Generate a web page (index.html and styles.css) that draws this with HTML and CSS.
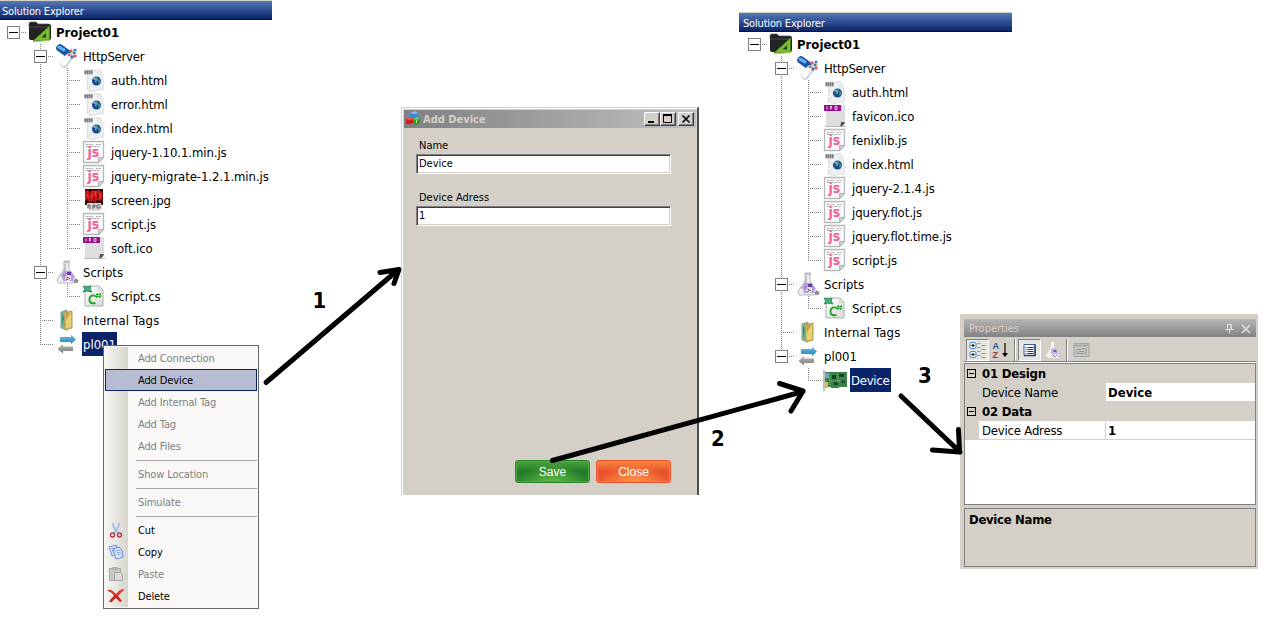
FILE: index.html
```html
<!DOCTYPE html>
<html lang="en">
<head>
<meta charset="utf-8">
<title>Add Device</title>
<link rel="stylesheet" href="styles.css">
</head>
<body>
<svg class="sprites" width="0" height="0">
  <defs>
    <linearGradient id="gPaper" x1="0" y1="0" x2="1" y2="1"><stop offset="0" stop-color="#fff"/><stop offset="1" stop-color="#d8d8d8"/></linearGradient>
    <linearGradient id="gBlue" x1="0" y1="0" x2="0" y2="1"><stop offset="0" stop-color="#7cc4e8"/><stop offset="1" stop-color="#1583bd"/></linearGradient>
    <linearGradient id="gGray" x1="0" y1="0" x2="0" y2="1"><stop offset="0" stop-color="#bdbdbd"/><stop offset="1" stop-color="#777"/></linearGradient>
    <symbol id="project" viewBox="0 0 24 24">
      <path d="M1 4q0-2 2-2h5l2 2h11q2 0 2 2v12q0 2-2 2H3q-2 0-2-2z" fill="#222"/>
      <path d="M1 7h22" stroke="#484848"/><path d="M1 7v-3q0-2 2-2h5l2 2h11" fill="none" stroke="#555" stroke-width=".7"/>
      <path d="M5 21 21.500 6v14z" fill="#78bd2c" stroke="#4f861b" stroke-width=".8"/>
      <path d="m13.500 17.500 4.500-4.500v4.500z" fill="#2c391b"/><path d="M4.500 22 22 20.500" stroke="#a5d95c" stroke-width="1.200"/>
    </symbol>
    <symbol id="server" viewBox="0 0 24 24">
      <path d="m5 4 7 5" stroke="#1558a8" stroke-width="7.500" stroke-linecap="round"/>
      <path d="m4 3 5 3" stroke="#69b4ec" stroke-width="3" stroke-linecap="round"/>
      <path d="m9 20 5-7" stroke="#c6ccd3" stroke-width="7.500" stroke-linecap="round"/>
      <path d="m8.500 19.500 4.500-6" stroke="#fbfbfc" stroke-width="5.500" stroke-linecap="round"/>
      <g fill="#dd5964"><circle cx="16" cy="7" r="1.700"/><circle cx="20" cy="12" r="1.700"/><circle cx="14" cy="11" r="1.300"/></g>
      <g fill="#3f78bb"><circle cx="20" cy="6" r="1.500"/><circle cx="17" cy="13" r="1.700"/><circle cx="19" cy="9" r="1.400"/></g>
      <g fill="#b3d47c"><circle cx="16" cy="9.500" r="1.200"/><circle cx="21" cy="9" r="1"/></g>
    </symbol>
    <symbol id="html" viewBox="0 0 24 24">
      <path d="M5 2h13q4 4 3 20-5-1-8 1-3 1-8-1 1-10 0-20z" fill="#f0f1f2" stroke="#d2d4d5" stroke-width=".8"/>
      <path d="m6 9 5 5-5 7m9-17 4 5" fill="none" stroke="#dadcdd"/>
      <rect x="2" y="2" width="9" height="4.500" rx="1" fill="#a8aaab"/><path d="M3.500 3v2.500m2-2.500v2.500m2-2.500v2.500M9.500 3v2.500" stroke="#5d6062" stroke-width=".8"/>
      <circle cx="14.500" cy="13" r="4.500" fill="#174a96"/><path d="M13 10.500q2-2 3 0l-1 3-2 1zm3.500.5 2 2-2 3z" fill="#56a77d"/><circle cx="12.500" cy="10.500" r="1.200" fill="#7fb4d7"/>
    </symbol>
    <symbol id="js" viewBox="0 0 24 24">
      <path d="M1.500 1.500h20v16l-5 5h-15z" fill="#fafafa" stroke="#b8b8b8" stroke-width="1.300"/>
      <path d="M21.500 17.500h-5v5z" fill="#d4d4d4" stroke="#aaa" stroke-width=".8"/>
      <path d="M4 4.500h7m3 0h5M4 6.500h14" stroke="#a2a2a2" stroke-dasharray="2 .7" stroke-width=".9"/>
      <text class="js-mark" x="5.500" y="17">js</text>
    </symbol>
    <symbol id="jpg" viewBox="0 0 24 24">
      <path d="M3 1h18v16H3z" fill="#250908"/>
      <path d="m3 3 3-1 2 2 3-2 3 1 2-1 4 2 1 5-2 4-4-1-2 3-3-2-3 2-1-4-3 2z" fill="#c91616"/>
      <path d="m5 6 2 4m6-7 1 5m4-3v6M10 5v5" stroke="#f0473a"/><path d="M8 4v4m4 1v5m4-8v5" stroke="#5c0a08"/>
      <path d="M5 15h14l1 6-4 2H9l-4-2z" fill="#d8d8d5"/><path d="M6 20v-3h2v4m3 0v-4h2v2h-2m7-2h-3v3h3v-2" fill="none" stroke="#5c5c5c"/>
    </symbol>
    <symbol id="ico" viewBox="0 0 24 24">
      <path d="M3 1h19v18l-3 4H3z" fill="#dedede"/><path d="M2 22.500h21" stroke="#b8b8b8"/><path d="M22 18q-1 4-5 4.500 1-2 1-4.500z" fill="#555"/>
      <path d="M1 1h17v6H1z" fill="#92118f"/><path d="M4 2.500V5.500m3-3h2l-2 1.500h2l-2 1.500m5-3h2v3h-2z" fill="none" stroke="#edbceb"/>
    </symbol>
    <symbol id="flask" viewBox="0 0 24 24">
      <path d="M9 1h6l-1 2v6l7 10q0 4-3 4H4q-3-1-1-5l6-9V3z" fill="#ededf1" stroke="#b5b5ba"/>
      <path d="M9 1h6v2H9zM9 4h2v6L7 17h-3l5-7z" fill="#c0c0c5"/>
      <path d="M9 11h7l3 5-1 5H8l-1-5z" fill="#b497e6"/><path d="M12 12h4v3h-4z" fill="#663aa2"/><path d="m8 14 2 2" stroke="#8a6ac4"/>
      <circle cx="13" cy="18" r="3" fill="#faf7f5"/><path d="m12 17 3 2m-4 1 2-1" stroke="#3d2543"/><path d="M9 17h3" stroke="#d27c5b"/>
      <ellipse cx="21" cy="21" rx="2.500" ry="2" fill="#8c8c91"/>
    </symbol>
    <symbol id="cs" viewBox="0 0 24 24">
      <path d="M3 2h14l4 4v16H3z" fill="url(#gPaper)" stroke="#a6b4a8"/><path d="m16 2 5 5h-5z" fill="#d3ddd4"/>
      <path d="m1 2 4 1 4-1-1 3 2 3-5-1-4 1 2-3z" fill="#45b17a" stroke="#2f8d5d"/>
      <path d="M14 12.500q-5-3-6.500 2-.5 6 6 4.500" fill="none" stroke="#28a32c" stroke-width="2"/>
      <path d="m15.500 9-1 5m4-5-1 5m-3.500-3.500h5m-5 2h5" stroke="#28a32c"/>
    </symbol>
    <symbol id="tags" viewBox="0 0 24 24">
      <path d="M6 4 12 2v20l-6-2z" fill="#76b8a0" stroke="#8ba38e"/><path d="M9 5 17 3v17l-7 2z" fill="#d4bf55" stroke="#b39a50"/>
      <path d="m11 13 5-8v14l-5 1z" fill="#e6d27a"/><path d="m7 5 2 5-2 9z" fill="#348f79"/><path d="m11 5 4-1-4 8z" fill="#ca9651"/>
    </symbol>
    <symbol id="link" viewBox="0 0 24 24">
      <path d="M5 5h11V2.500l5 5-5 4.500V10H5z" fill="url(#gBlue)"/><path d="M18 14.500H8V12l-5.500 5 5.500 4.500V19h10z" fill="url(#gGray)"/>
    </symbol>
    <symbol id="board" viewBox="0 0 24 24">
      <path d="M2 4h22v15h-8v1h-8v-1H2z" fill="#388347"/><path d="M1 2v21" stroke="#a4abad" stroke-width="1.500"/>
      <path d="M2 5h4v5H2z" fill="#6aa9cf"/><path d="M2 14h3v6H2z" fill="#eeb544"/>
      <path d="M9 7h4v4H9zm7-1h5v3h-5zm-5 8h4v3h-4zm7-2h4v3h-4z" fill="#153f28"/><path d="M7 6v11m8-11v10M8 13h14" stroke="#8bc06c" stroke-dasharray="1 1"/>
    </symbol>
    <symbol id="cubes" viewBox="0 0 16 16">
      <path d="m4 2 5-2 3 2v5l-4 2-4-2z" fill="#3c87d8"/><path d="m4 2 5-2 3 2-4 1z" fill="#86c0f2"/>
      <path d="m0 8 4-2 4 2v4l-4 1H0z" fill="#cf201c"/><path d="m0 8 4-2 4 2-4 1z" fill="#ee5a4b"/>
      <path d="m7 8 4-2 3 2v4l-4 2-3-2z" fill="#269b26"/><path d="m7 8 4-2 3 2-4 1z" fill="#63cf5a"/><path d="M10.500 9v3" stroke="#b4edaa"/>
    </symbol>
  </defs>
</svg>

<main class="canvas">
  <section class="explorer explorer-left">
    <h2 class="explorer-title">Solution Explorer</h2>
    <div class="tree">
      <div class="row"><i class="cell root"><b class="toggle"></b></i><svg class="icon"><use href="#project"/></svg><span class="label bold">Project01</span></div>
      <div class="row"><i class="cell"></i><i class="cell tee"><b class="toggle"></b></i><svg class="icon"><use href="#server"/></svg><span class="label tight">HttpServer</span></div>
      <div class="row leaf"><i class="cell"></i><i class="cell line"></i><i class="cell tee"></i><svg class="icon"><use href="#html"/></svg><span class="label">auth.html</span></div>
      <div class="row leaf"><i class="cell"></i><i class="cell line"></i><i class="cell tee"></i><svg class="icon"><use href="#html"/></svg><span class="label">error.html</span></div>
      <div class="row leaf"><i class="cell"></i><i class="cell line"></i><i class="cell tee"></i><svg class="icon"><use href="#html"/></svg><span class="label">index.html</span></div>
      <div class="row leaf"><i class="cell"></i><i class="cell line"></i><i class="cell tee"></i><svg class="icon"><use href="#js"/></svg><span class="label">jquery-1.10.1.min.js</span></div>
      <div class="row leaf"><i class="cell"></i><i class="cell line"></i><i class="cell tee"></i><svg class="icon"><use href="#js"/></svg><span class="label">jquery-migrate-1.2.1.min.js</span></div>
      <div class="row leaf"><i class="cell"></i><i class="cell line"></i><i class="cell tee"></i><svg class="icon"><use href="#jpg"/></svg><span class="label">screen.jpg</span></div>
      <div class="row leaf"><i class="cell"></i><i class="cell line"></i><i class="cell tee"></i><svg class="icon"><use href="#js"/></svg><span class="label">script.js</span></div>
      <div class="row leaf"><i class="cell"></i><i class="cell line"></i><i class="cell end"></i><svg class="icon"><use href="#ico"/></svg><span class="label">soft.ico</span></div>
      <div class="row"><i class="cell"></i><i class="cell tee"><b class="toggle"></b></i><svg class="icon"><use href="#flask"/></svg><span class="label">Scripts</span></div>
      <div class="row leaf"><i class="cell"></i><i class="cell line"></i><i class="cell end"></i><svg class="icon"><use href="#cs"/></svg><span class="label">Script.cs</span></div>
      <div class="row"><i class="cell"></i><i class="cell tee"></i><svg class="icon"><use href="#tags"/></svg><span class="label wide">Internal Tags</span></div>
      <div class="row"><i class="cell"></i><i class="cell end"></i><svg class="icon"><use href="#link"/></svg><span class="label selected">pl001</span></div>
    </div>
  </section>

  <nav class="menu">
    <div class="item off">Add Connection</div>
    <div class="item active">Add Device</div>
    <div class="item off">Add Internal Tag</div>
    <div class="item off">Add Tag</div>
    <div class="item off">Add Files</div>
    <div class="rule"></div>
    <div class="item off">Show Location</div>
    <div class="rule"></div>
    <div class="item off">Simulate</div>
    <div class="rule"></div>
    <div class="item"><svg class="menu-icon" viewBox="0 0 16 16"><path d="M5 1q0 5 5 10M11 1q0 5-5 10" fill="none" stroke="#9bc0ee" stroke-width="1.800"/><circle cx="4.500" cy="13" r="2" fill="none" stroke="#b83b40" stroke-width="1.500"/><circle cx="11.500" cy="13" r="2" fill="none" stroke="#b83b40" stroke-width="1.500"/></svg>Cut</div>
    <div class="item"><svg class="menu-icon" viewBox="0 0 16 16"><path d="m1 3 7-2 3 8-7 3z" fill="#cfe0fb" stroke="#6f93dd"/><path d="m5 5 6-2 3 3 1 7-7 2z" fill="#e4eefe" stroke="#5c82d4"/><path d="m7 7 5-1m-4 3 5-1m-4 3 4-1M3 5l2-1M4 7l1-.5" stroke="#7da0e5"/></svg>Copy</div>
    <div class="item off"><svg class="menu-icon" viewBox="0 0 16 16"><path d="M1.500 2.500h11v12h-11z" fill="#c8c7c3" stroke="#aaa9a6"/><path d="M4 1h6v3H4z" fill="#b2b1ae"/><path d="M6.500 6.500h6l2 2v6h-8z" fill="#dad9d6" stroke="#a8a7a4"/></svg>Paste</div>
    <div class="item"><svg class="menu-icon" viewBox="0 0 16 16"><path d="M0 2q3-1 6 2l2 2q3-4 7-5l1 1q-4 3-6 6l4 5-2 1-4-4q-3 2-4 4H1q2-4 5-6-2-4-6-5z" fill="#cf1c12"/><path d="M2 2.500q2 0 4 3l2 2 6-5.500" fill="none" stroke="#ef7464" stroke-width=".8"/></svg>Delete</div>
  </nav>

  <section class="dialog">
    <header class="dialog-bar"><svg class="app-icon"><use href="#cubes"/></svg><span class="dialog-title">Add Device</span>
      <div class="window-buttons">
        <b class="wbtn"><svg viewBox="0 0 12 10"><path d="M2 8h6" stroke="#000" stroke-width="2"/></svg></b>
        <b class="wbtn"><svg viewBox="0 0 12 10"><path d="M1.500 1v7.500h8V1" fill="none" stroke="#000"/><path d="M1 1h9" stroke="#000" stroke-width="2"/></svg></b>
        <b class="wbtn gap"><svg viewBox="0 0 12 10"><path d="m2.500 1.500 7 7m0-7-7 7" stroke="#000" stroke-width="1.600"/></svg></b>
      </div>
    </header>
    <div class="form">
      <label class="caption">Name</label><div class="input">Device</div>
      <label class="caption">Device Adress</label><div class="input">1</div>
    </div>
    <div class="actions"><button class="btn save">Save</button><button class="btn close">Close</button></div>
  </section>

  <section class="explorer explorer-right">
    <h2 class="explorer-title">Solution Explorer</h2>
    <div class="tree">
      <div class="row"><i class="cell root"><b class="toggle"></b></i><svg class="icon"><use href="#project"/></svg><span class="label bold">Project01</span></div>
      <div class="row"><i class="cell"></i><i class="cell tee"><b class="toggle"></b></i><svg class="icon"><use href="#server"/></svg><span class="label tight">HttpServer</span></div>
      <div class="row leaf"><i class="cell"></i><i class="cell line"></i><i class="cell tee"></i><svg class="icon"><use href="#html"/></svg><span class="label">auth.html</span></div>
      <div class="row leaf"><i class="cell"></i><i class="cell line"></i><i class="cell tee"></i><svg class="icon"><use href="#ico"/></svg><span class="label">favicon.ico</span></div>
      <div class="row leaf"><i class="cell"></i><i class="cell line"></i><i class="cell tee"></i><svg class="icon"><use href="#js"/></svg><span class="label">fenixlib.js</span></div>
      <div class="row leaf"><i class="cell"></i><i class="cell line"></i><i class="cell tee"></i><svg class="icon"><use href="#html"/></svg><span class="label">index.html</span></div>
      <div class="row leaf"><i class="cell"></i><i class="cell line"></i><i class="cell tee"></i><svg class="icon"><use href="#js"/></svg><span class="label">jquery-2.1.4.js</span></div>
      <div class="row leaf"><i class="cell"></i><i class="cell line"></i><i class="cell tee"></i><svg class="icon"><use href="#js"/></svg><span class="label">jquery.flot.js</span></div>
      <div class="row leaf"><i class="cell"></i><i class="cell line"></i><i class="cell tee"></i><svg class="icon"><use href="#js"/></svg><span class="label">jquery.flot.time.js</span></div>
      <div class="row leaf"><i class="cell"></i><i class="cell line"></i><i class="cell end"></i><svg class="icon"><use href="#js"/></svg><span class="label">script.js</span></div>
      <div class="row"><i class="cell"></i><i class="cell tee"><b class="toggle"></b></i><svg class="icon"><use href="#flask"/></svg><span class="label">Scripts</span></div>
      <div class="row leaf"><i class="cell"></i><i class="cell line"></i><i class="cell end"></i><svg class="icon"><use href="#cs"/></svg><span class="label">Script.cs</span></div>
      <div class="row"><i class="cell"></i><i class="cell tee"></i><svg class="icon"><use href="#tags"/></svg><span class="label wide">Internal Tags</span></div>
      <div class="row"><i class="cell"></i><i class="cell end"><b class="toggle"></b></i><svg class="icon"><use href="#link"/></svg><span class="label">pl001</span></div>
      <div class="row"><i class="cell"></i><i class="cell"></i><i class="cell end"></i><svg class="icon"><use href="#board"/></svg><span class="label selected tight">Device</span></div>
    </div>
  </section>

  <section class="props">
    <header class="props-bar"><span>Properties</span>
      <svg class="props-tools" viewBox="0 0 28 12"><path d="M3.500 1.500h4v5h-4zm-2 5h8m-4 0v4M7 2v4" fill="none" stroke="#e4e2dd"/><path d="m18 2 8 8m0-8-8 8" stroke="#e4e2dd" stroke-width="1.500"/></svg>
    </header>
    <div class="toolbar">
      <span class="tool pressed"><svg viewBox="0 0 18 18"><g fill="#eef6ff" stroke="#3a84c4"><rect x="1.500" y="1.500" width="6" height="6" rx="1.500"/><rect x="1.500" y="10.500" width="6" height="6" rx="1.500"/></g><path d="M3 4.500h3M4.500 3v3M3 13.500h3M4.500 12v3" stroke="#000"/><path d="M9 2.500h3m1 2h4m-8 2h3m1 2h4m-8 2h3m1 2h4m-8 2h3m1 2h4" stroke="#8b98aa"/></svg></span>
      <span class="tool"><svg viewBox="0 0 18 18"><text class="sort-a" x="1" y="8">A</text><text class="sort-z" x="1" y="17">Z</text><path d="M13.500 2v12" stroke="#000" stroke-width="1.200"/><path d="M10.500 12h6l-3 4z"/></svg></span>
      <i class="split"></i>
      <span class="tool pressed"><svg viewBox="0 0 18 18"><path d="M3.500 3.500h11v11h-11z" fill="#fff" stroke="#385b98"/><path d="M3.500 14.500h11v-11" fill="none" stroke="#293b73" stroke-width="1.500"/><path d="M5 6.500h1m1 0h6m-8 2h1m1 0h6m-8 2h1m1 0h6m-8 2h1m1 0h6" stroke="#335"/></svg></span>
      <span class="tool flask"><svg viewBox="0 0 18 18"><path d="M7.500 1h3v6l5 7v3h-13v-3l5-7z" fill="#f4f3f2"/><path d="M2 16.500h3m9-1h3" stroke="#bbb"/><path d="m8 8 3-1 3 4v4h-4l-3-3z" fill="#c3b0e0"/><path d="M10 9h3v2h-3z" fill="#8054b6"/><path d="M8 13h4v3H8z" fill="#fff"/><path d="m9 14 3 2" stroke="#59405c"/></svg></span>
      <i class="split"></i>
      <span class="tool"><svg viewBox="0 0 18 18"><path d="M1.500 2.500h15v13h-15z" fill="#c9c8c4" stroke="#a4a4a4"/><path d="M2 4.500h14" stroke="#a8a8a8" stroke-width="2"/><path d="M4.500 8.500h4l1-1h4v5h-9zm2 2h5" fill="none" stroke="#999"/></svg></span>
    </div>
    <div class="grid">
      <div class="group"><i class="fold"></i><span>01 Design</span></div>
      <div class="prop"><i class="margin"></i><span class="key shade">Device Name</span><b class="value">Device</b></div>
      <div class="group"><i class="fold"></i><span>02 Data</span></div>
      <div class="prop"><i class="margin"></i><span class="key">Device Adress</span><b class="value">1</b></div>
    </div>
    <div class="help">Device Name</div>
  </section>

  <svg class="arrows" viewBox="0 0 1272 621">
    <g fill="none" stroke="#000" stroke-width="5" stroke-linecap="round" stroke-linejoin="round">
      <path d="M266 382.500 398.500 269.500M380 272.500l19-3-5 14"/>
      <path d="M552.500 460.500 803 391.500M779.500 383.500l23.500 7.500-12 20"/>
      <path d="M901 396 960 452M958.500 429.500l1 22.500-27-2"/>
    </g>
    <g class="steps"><text x="312.500" y="307.500">1</text><text x="711" y="446">2</text><text x="918" y="382.500">3</text></g>
  </svg>
</main>
</body>
</html>
```
FILE: styles.css
```css
* { box-sizing: border-box; }
body { margin: 0; background: #fff; color: #000; font-family: "DejaVu Sans Condensed", "DejaVu Sans", sans-serif; }
.sprites { display: block; }
.canvas { position: relative; width: 1272px; height: 621px; overflow: hidden; }

/* windows placed on the canvas */
.explorer, .menu, .dialog, .props, .arrows { position: absolute; }
.explorer-left { left: 0; top: 0; width: 272px; }
.explorer-right { left: 739px; top: 12px; width: 273px; }
.menu { left: 103px; top: 345px; }
.dialog { left: 401px; top: 107px; }
.props { left: 960px; top: 314px; }
.arrows { left: 0; top: 0; width: 1272px; height: 621px; }

/* solution explorer */
.explorer-title {
  margin: 0; height: 20px; padding-left: 2px;
  font: 11px/21px "DejaVu Sans Condensed", "DejaVu Sans", sans-serif; letter-spacing: -.18px; color: #fff;
  background: linear-gradient(#5478b6, #0a246a);
  border-top: 1px solid #d4d0c8; border-bottom: 1px solid #0a1030;
}
.explorer-right .explorer-title { padding-left: 4px; }
.explorer-right .tree { padding-left: 2px; }
.row { display: flex; align-items: center; height: 24px; }
.cell {
  --dots-v: repeating-linear-gradient(#808080 0 1px, transparent 1px 2px);
  --dots-h: repeating-linear-gradient(90deg, #808080 0 1px, transparent 1px 2px);
  width: 27px; height: 24px; padding: 6px 7px; background-repeat: no-repeat;
}
.root { background-image: var(--dots-h); background-size: 14px 1px; background-position: 13px 12px; }
.line { background-image: var(--dots-v); background-size: 1px 24px; background-position: 13px 0; }
.tee { background-image: var(--dots-v), var(--dots-h); background-size: 1px 24px, 14px 1px; background-position: 13px 0, 13px 12px; }
.end { background-image: var(--dots-v), var(--dots-h); background-size: 1px 13px, 14px 1px; background-position: 13px 0, 13px 12px; }
.toggle {
  display: block; width: 13px; height: 13px; border: 1px solid #808080;
  background: linear-gradient(#000, #000) center / 9px 1px no-repeat #fff;
}
.icon { width: 24px; height: 24px; margin-left: 1px; margin-right: 3px; }
.label { height: 24px; padding: 1px 1px 0; font-size: 13px; line-height: 24px; white-space: nowrap; }
.leaf .label { padding-left: 2px; letter-spacing: -.07px; }
.tight { letter-spacing: -.25px; }
.wide { letter-spacing: .15px; }
.bold { font-weight: bold; }
.selected { background: #0a246a; color: #fff; }
.js-mark { font: bold 14px "DejaVu Sans Condensed", "DejaVu Sans", sans-serif; fill: #f0609a; }

/* context menu */
.menu {
  width: 156px; height: 264px; padding: 1px; border: 1px solid #666;
  background: linear-gradient(90deg, #f8f7f5, #d8d5cc) 0 1px / 24px 260px no-repeat #f9f8f7;
}
.item { display: flex; align-items: center; height: 22px; padding-left: 3px; font-size: 11px; letter-spacing: -.12px; }
.item::before { content: ""; width: 30px; }
.item:has(.menu-icon)::before { display: none; }
.menu-icon { width: 16px; height: 16px; margin-right: 14px; }
.off { color: #808080; }
.active { padding-left: 2px; border: 1px solid #0a246a; background: #b6bdd2; }
.rule { height: 1px; margin: 3px 0 2px 31px; background: #a6a6a6; }

/* add device dialog */
.dialog {
  display: flex; flex-direction: column; width: 298px; height: 388px; padding: 1px 1px 0;
  background: #d4d0c8; border: solid; border-width: 1px 2px 0 1px; border-color: #d4d0c8 #505050 #d4d0c8 #d4d0c8;
  box-shadow: inset 1px 1px #fff;
}
.dialog-bar {
  display: flex; align-items: center; height: 18px; margin: 1px 0 0 1px; padding: 0 2px;
  background: linear-gradient(90deg, #808080, #c0c0c0);
}
.app-icon { width: 16px; height: 16px; margin-right: 1px; }
.dialog-title { flex: 1; color: #d4d0c8; font-size: 11px; font-weight: bold; }
.window-buttons { display: flex; }
.wbtn {
  display: flex; width: 16px; height: 14px; padding: 1px; background: #d4d0c8;
  border: 1px solid; border-color: #fff #404040 #404040 #fff; box-shadow: inset -1px -1px #808080;
}
.wbtn svg { width: 12px; height: 10px; }
.gap { margin-left: 2px; }
.form { display: flex; flex-direction: column; padding: 9px 0 0 13px; }
.caption { height: 16px; padding-left: 3px; font-size: 11px; line-height: 17px; }
.input {
  width: 255px; height: 20px; margin: 1px 0 15px; padding-left: 2px; font-size: 11px; line-height: 18px; background: #fff;
  border: 1px solid; border-color: #808080 #fff #fff #808080; box-shadow: inset 1px 1px #404040, inset -1px -1px #d4d0c8;
}
.actions { display: flex; gap: 6px; margin: auto 0 12px 112px; }
.btn {
  width: 75px; height: 23px; padding: 0; border-radius: 3px; color: #fff;
  font: 12px "Liberation Sans", Arial, sans-serif;
}
.save { border: 1px solid #2c842c; background: radial-gradient(ellipse at 50% 110%, #62bb46, transparent 65%), linear-gradient(#4aa43a, #237a29 50%, #2f8a30); box-shadow: inset 0 0 0 1px #50ad3d; }
.close { border: 1px solid #ee4e28; background: radial-gradient(ellipse at 50% 110%, #fb9a4a, transparent 65%), linear-gradient(#f58a40, #e8502a 50%, #ec5e2e); box-shadow: inset 0 0 0 1px #f98742; }

/* properties panel */
.props { display: flex; flex-direction: column; width: 298px; height: 255px; padding: 5px 2px 2px 4px; background: #d4d0c8; }
.props-bar {
  display: flex; justify-content: space-between; align-items: center; height: 18px; padding: 1px 4px 0 5px;
  color: #d4d0c8; font-size: 11px; background: linear-gradient(#b6b6b6, #828282);
}
.props-tools { width: 28px; height: 12px; }
.toolbar { display: flex; height: 25px; padding: 2px 0 0 2px; border-bottom: 1px solid #808080; box-shadow: 0 1px #fff; }
.tool { width: 23px; height: 22px; padding: 1px; border: 1px solid transparent; }
.tool svg { display: block; width: 19px; height: 18px; }
.pressed { background: #e7e5e0; border-color: #808080 #fff #fff #808080; }
.split { width: 2px; margin: 0 2px; border-left: 1px solid #808080; border-right: 1px solid #fff; }
.sort-a { font: bold 9px "Liberation Sans", sans-serif; fill: #2a559c; }
.sort-z { font: bold 9px "Liberation Sans", sans-serif; fill: #a33; }
.grid { height: 142px; margin-top: 1px; border: 1px solid #808080; background: #fff; font-size: 13px; }
.group { display: flex; align-items: center; height: 19px; padding-left: 2px; background: #d4d0c8; font-weight: bold; line-height: 21px; letter-spacing: -.2px; }
.fold { width: 9px; height: 9px; margin: 0 6px 1px 0; border: 1px solid #000; background: linear-gradient(#000, #000) center / 5px 1px no-repeat; }
.prop { display: flex; height: 19px; line-height: 20px; border-bottom: 1px solid #d4d0c8; }
.margin { width: 14px; background: #d4d0c8; }
.key { width: 127px; padding-left: 3px; border-right: 1px solid #d4d0c8; letter-spacing: -.2px; }
.shade { background: #d4d0c8; }
.value { padding-left: 2px; }
.help { flex: 1; margin-top: 3px; padding: 3px 4px; border: 1px solid #808080; font-size: 13px; font-weight: bold; letter-spacing: -.3px; }
.steps { font: bold 22px "DejaVu Sans Condensed", "DejaVu Sans", sans-serif; }
```
